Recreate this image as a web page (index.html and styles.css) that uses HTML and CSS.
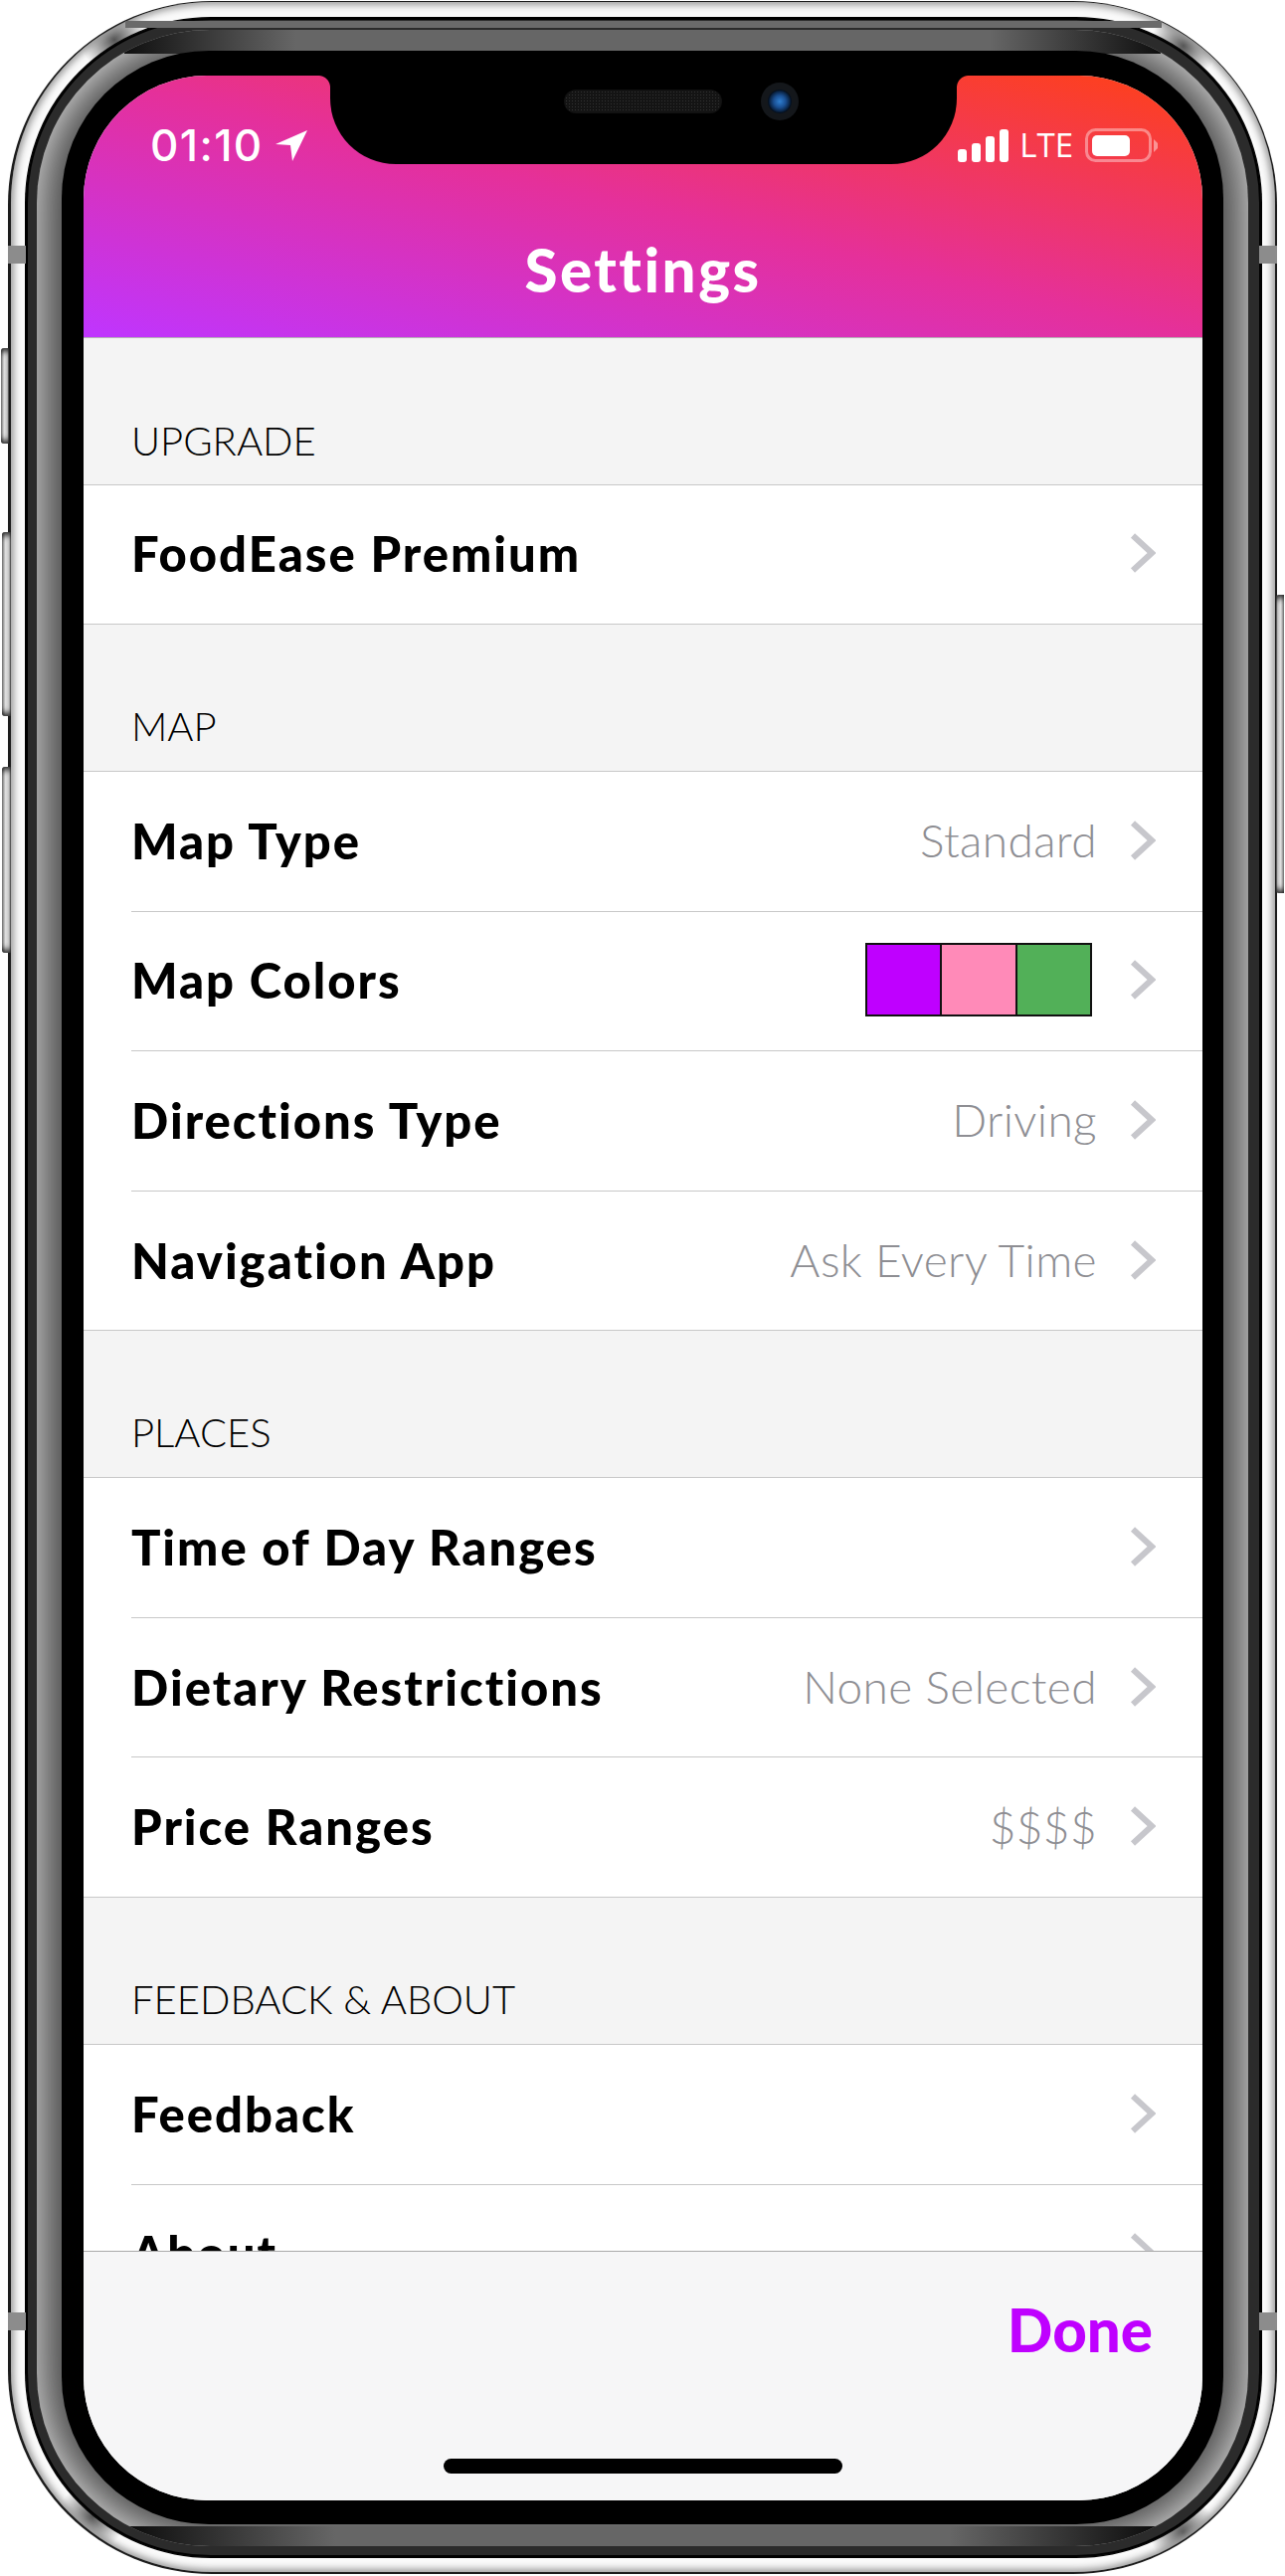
FILE: index.html
```html
<!DOCTYPE html>
<html lang="en">
<head>
    <meta charset="UTF-8">
    <title>Settings | FoodEase</title>
    <meta name="viewport" content="width=device-width, initial-scale=1">
    <link rel="stylesheet" href="styles.css">
</head>
<body>
<svg class="defs" width="0" height="0">
    <symbol id="chevron" viewBox="0 0 26 40"><path d="M3 2.5 L22 20 L3 37.5" fill="none" stroke="#c7c7cc" stroke-width="6"/></symbol>
</svg>
<div class="phone">
    <div class="btn btn-mute"></div>
    <div class="btn btn-up"></div>
    <div class="btn btn-down"></div>
    <div class="btn btn-power"></div>
    <div class="antenna ant-tl"></div>
    <div class="antenna ant-tr"></div>
    <div class="antenna ant-bl"></div>
    <div class="antenna ant-br"></div>
    <div class="silver">
        <div class="band">
            <div class="bezel">
                <div class="glass">
                    <div class="screen">
                        <div class="notch">
                            <div class="speaker"></div>
                            <div class="camera"></div>
                        </div>
                        <header class="nav">
                            <div class="status">
                                <div class="status-left">
                                    <span class="time">01:10</span>
                                    <svg class="arrow" width="34" height="33" viewBox="0 0 34 33"><path d="M1 15 L33 1 L18 32 L16 16 Z" fill="#fff"/></svg>
                                </div>
                                <div class="status-right">
                                    <svg class="signal" width="52" height="33" viewBox="0 0 52 33" fill="#fff">
                                        <rect x="0" y="20" width="9" height="13" rx="3"/>
                                        <rect x="14" y="14" width="9" height="19" rx="3"/>
                                        <rect x="28" y="7" width="9" height="26" rx="3"/>
                                        <rect x="42" y="0" width="9" height="33" rx="3"/>
                                    </svg>
                                    <span class="lte">LTE</span>
                                    <svg class="battery" width="74" height="35" viewBox="0 0 74 35">
                                        <rect x="1.5" y="1.5" width="64" height="31" rx="9" fill="none" stroke="#fff" stroke-opacity="0.4" stroke-width="3"/>
                                        <rect x="7" y="7" width="38" height="21" rx="5" fill="#fff"/>
                                        <path d="M69 11 L73 15 L73 20 L69 24 Z" fill="#fff" fill-opacity="0.45"/>
                                    </svg>
                                </div>
                            </div>
                            <h1 class="title">Settings</h1>
                        </header>

                        <main class="list">
                            <div class="section-head first">UPGRADE</div>
                            <section class="rows">
                                <div class="row"><div class="row-inner"><span class="label">FoodEase Premium</span><svg class="chev"><use href="#chevron"/></svg></div></div>
                            </section>

                            <div class="section-head">MAP</div>
                            <section class="rows">
                                <div class="row"><div class="row-inner"><span class="label">Map Type</span><span class="value">Standard</span><svg class="chev"><use href="#chevron"/></svg></div></div>
                                <div class="row"><div class="row-inner"><span class="label">Map Colors</span>
                                    <div class="swatches"><span class="swatch purple"></span><span class="swatch pink"></span><span class="swatch green"></span></div>
                                    <svg class="chev"><use href="#chevron"/></svg></div></div>
                                <div class="row"><div class="row-inner"><span class="label">Directions Type</span><span class="value">Driving</span><svg class="chev"><use href="#chevron"/></svg></div></div>
                                <div class="row"><div class="row-inner"><span class="label">Navigation App</span><span class="value">Ask Every Time</span><svg class="chev"><use href="#chevron"/></svg></div></div>
                            </section>

                            <div class="section-head">PLACES</div>
                            <section class="rows">
                                <div class="row"><div class="row-inner"><span class="label">Time of Day Ranges</span><svg class="chev"><use href="#chevron"/></svg></div></div>
                                <div class="row"><div class="row-inner"><span class="label">Dietary Restrictions</span><span class="value">None Selected</span><svg class="chev"><use href="#chevron"/></svg></div></div>
                                <div class="row"><div class="row-inner"><span class="label">Price Ranges</span><span class="value">$$$$</span><svg class="chev"><use href="#chevron"/></svg></div></div>
                            </section>

                            <div class="section-head">FEEDBACK &amp; ABOUT</div>
                            <section class="rows">
                                <div class="row"><div class="row-inner"><span class="label">Feedback</span><svg class="chev"><use href="#chevron"/></svg></div></div>
                                <div class="row"><div class="row-inner"><span class="label">About</span><svg class="chev"><use href="#chevron"/></svg></div></div>
                            </section>
                        </main>

                        <footer class="footer">
                            <button class="done">Done</button>
                            <div class="home-bar"></div>
                        </footer>
                    </div>
                </div>
            </div>
        </div>
    </div>
</div>
</body>
</html>
```

FILE: styles.css
```css
html, body { margin: 0; padding: 0; background: #fff; height: 2590px; overflow: hidden; }
body { font-family: Lato, 'Noto Sans', sans-serif; }
.defs { position: absolute; }

/* phone shell: nested rings, outside to inside */
.phone { position: relative; box-sizing: border-box; width: 1276px; height: 2587px; margin: 1px 8px 0; padding: 1px 2px 2px 3px; border-radius: 205px; background: #1c1c1c; }
.silver { box-sizing: border-box; height: 100%; padding: 16px 14px 15px 15px; border-radius: 202px; box-shadow: inset 0 0 7px 3px #9a9a9a;
    background:
        radial-gradient(circle 34px at 104px 38px, #555, transparent),
        radial-gradient(circle 34px at calc(100% - 92px) 44px, #555, transparent),
        radial-gradient(circle 34px at 82px calc(100% - 56px), #555, transparent),
        radial-gradient(circle 34px at calc(100% - 92px) calc(100% - 40px), #555, transparent),
        #fafafa; }
.band { position: relative; box-sizing: border-box; height: 100%; padding: 12px 13px 11px 11px; border-radius: 186px; background: #2b2b2b; box-shadow: 0 0 0 1px #000, inset 0 0 0 2px #000; }
.band::before { content: ''; position: absolute; top: 3px; left: 100px; right: 100px; height: 7px; background: #6a6a6a; }
.bezel { position: relative; box-sizing: border-box; height: 100%; padding: 21px 25px 22px 25px; border-radius: 174px; background: #4a4a4a; box-shadow: inset 0 0 40px 5px #ddd; overflow: hidden; }
.bezel::before, .bezel::after { content: ''; position: absolute; left: 0; right: 0; height: 24px; }
.bezel::before { top: 0; background: linear-gradient(90deg, #111 92px, #666 260px, #666 calc(100% - 260px), #111 calc(100% - 92px)); clip-path: polygon(88px 18px, 108px 0, calc(100% - 108px) 0, calc(100% - 88px) 18px, calc(100% - 88px) 100%, 88px 100%); }
.bezel::after { bottom: 0; background: linear-gradient(90deg, #0c0c0c 92px, #666 300px, #666 calc(100% - 300px), #0c0c0c calc(100% - 92px)); clip-path: polygon(88px 100%, 108px 100%, calc(100% - 108px) 100%, calc(100% - 88px) 4px, 88px 4px); }
.glass { position: relative; z-index: 1; box-sizing: border-box; height: 100%; padding: 25px 21px 24px 22px; border-radius: 148px; background: #000; }

/* side buttons and antenna lines sit over the shell */
.btn { position: absolute; background: linear-gradient(90deg, #777, #e0e0e0 40%, #c4c4c4 80%, #333); border-radius: 3px 0 0 3px; box-shadow: inset 0 8px 6px -5px #222, inset 0 -8px 6px -5px #222; }
.btn-mute { left: -7px; top: 349px; width: 8px; height: 96px; }
.btn-up { left: -6px; top: 534px; width: 9px; height: 185px; }
.btn-down { left: -6px; top: 770px; width: 9px; height: 187px; }
.btn-power { right: -7px; top: 597px; width: 8px; height: 300px; border-radius: 0 3px 3px 0; transform: scaleX(-1); }
.antenna { position: absolute; z-index: 2; width: 18px; height: 18px; background: #8c8c8c; }
.ant-tl { left: 0; top: 246px; }
.ant-bl { left: 0; top: 2324px; }
.ant-tr { right: 0; top: 246px; }
.ant-br { right: 0; top: 2324px; }

/* screen */
.screen { position: relative; height: 100%; display: flex; flex-direction: column; border-radius: 124px; overflow: hidden; background: #f4f4f4; }
.notch { position: absolute; z-index: 3; top: 0; left: 248px; width: 630px; height: 89px; background: #000; border-radius: 0 0 66px 66px; }
.notch::before, .notch::after { content: ''; position: absolute; top: 0; width: 12px; height: 12px; }
.notch::before { left: -12px; background: radial-gradient(circle at 0 100%, transparent 11.5px, #000 12.5px); }
.notch::after { right: -12px; background: radial-gradient(circle at 100% 100%, transparent 11.5px, #000 12.5px); }
.speaker { position: absolute; left: 236px; top: 15px; width: 157px; height: 22px; border-radius: 11px; background: #141414 radial-gradient(#333 0.8px, transparent 1px) 0 0 / 3px 3px; box-shadow: 0 0 0 1px #111; }
.camera { position: absolute; left: 433px; top: 7px; width: 38px; height: 38px; border-radius: 50%; background: radial-gradient(circle at 50% 50%, #2f7fd0 0, #1a4f92 6px, #0a2547 10px, #05101f 11.5px, #14171b 12.5px); }

.nav { height: 264px; flex: none; box-sizing: border-box; padding-top: 52px; background: linear-gradient(to top right, #bf35ff, #e5309a 50%, #ff4114); border-bottom: 1px solid #b5b5b5; }
.status { display: flex; justify-content: space-between; align-items: center; height: 36px; padding: 0 44px 0 67px; color: #fff; }
.status-left { display: flex; align-items: center; gap: 11px; }
.time { font-family: Inter, sans-serif; font-size: 44px; font-weight: 500; letter-spacing: 1.4px; line-height: 36px; }
.status-right { display: flex; align-items: center; }
.lte { font-family: 'Open Sans', sans-serif; font-size: 33px; line-height: 36px; margin: 0 12px 0 10px; }
.title { margin: 74px 0 0; text-align: center; font-size: 60px; font-weight: 900; letter-spacing: 2.5px; color: #fff; line-height: 66px; }

.list { flex: 1; min-height: 0; overflow: hidden; }
.section-head { box-sizing: border-box; height: 147.9px; padding: 77px 0 0 48px; font-size: 40px; line-height: 50px; font-weight: 300; color: #000; border-bottom: 1.5px solid #c8c8c8; background: #f4f4f4; }
.section-head.first { height: 147.5px; padding-top: 78px; }
.rows { background: #fff; }
.row { padding-left: 48px; }
.row:last-child { padding-left: 0; }
.row-inner { box-sizing: border-box; height: 140.6px; display: flex; align-items: center; padding: 0 47px 2px 0; border-bottom: 1.5px solid #c8c8c8; }
.row:last-child .row-inner { padding-left: 48px; }
.label { flex: 1; font-size: 49px; font-weight: 900; letter-spacing: 2px; color: #000; }
.value { font-size: 46px; font-weight: 300; letter-spacing: 0.4px; color: #8e8e93; margin-right: 33px; }
.chev { width: 26px; height: 40px; flex: none; }
.swatches { display: flex; margin-right: 38px; border: 2px solid #111; }
.swatch { width: 73.3px; height: 70px; }
.swatch + .swatch { border-left: 2px solid #111; }
.purple { background: #bf00ff; }
.pink { background: #ff8ab8; }
.green { background: #52b058; }

.footer { height: 251px; flex: none; box-sizing: border-box; display: flex; flex-direction: column; align-items: center; border-top: 1.5px solid #aaa; background: #f6f6f7; }
.done { align-self: flex-end; margin: 42px 50px 0 0; padding: 0; border: none; background: none; font-family: Lato, sans-serif; font-size: 60px; font-weight: 900; color: #bf00ff; line-height: 72px; }
.home-bar { margin-top: 94px; width: 401px; height: 15px; border-radius: 8px; background: #000; }
```
